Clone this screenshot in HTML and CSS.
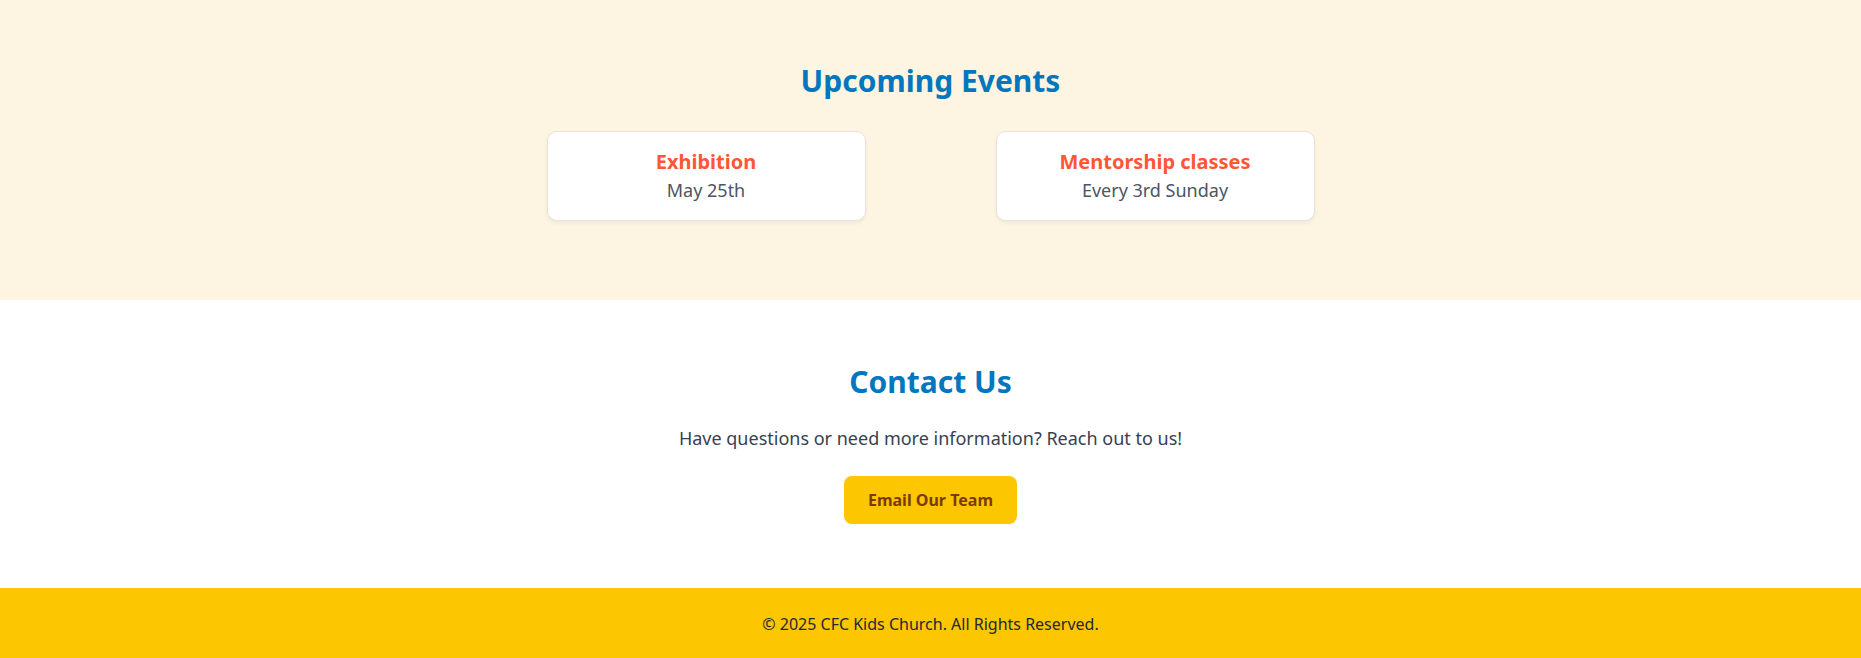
FILE: index.html
```html
<!DOCTYPE html>
<html lang="en">
<head>
<meta charset="utf-8">
<title>CFC Kids Church</title>
<link rel="stylesheet" href="styles.css">
</head>
<body>
  <section class="events">
    <h2 class="section-title">Upcoming Events</h2>
    <div class="event-grid">
      <div class="event-card">
        <h3 class="event-name">Exhibition</h3>
        <p class="event-date">May 25th</p>
      </div>
      <div class="event-card">
        <h3 class="event-name">Mentorship classes</h3>
        <p class="event-date">Every 3rd Sunday</p>
      </div>
    </div>
  </section>
  <section class="contact">
    <h2 class="section-title">Contact Us</h2>
    <p class="contact-text">Have questions or need more information? Reach out to us!</p>
    <a class="email-btn" href="#">Email Our Team</a>
  </section>
  <footer class="footer">
    <p>&copy; 2025 CFC Kids Church. All Rights Reserved.</p>
  </footer>
</body>
</html>
```

FILE: styles.css
```css
* { box-sizing: border-box; }
html, body { margin: 0; padding: 0; }
body {
  font-family: "Noto Sans", "Open Sans", sans-serif;
  color: #374151;
  background: #ffffff;
}
h2, h3, p { margin: 0; }

.section-title {
  font-size: 30px;
  line-height: 36px;
  font-weight: 700;
  color: #0277bd;
  text-align: center;
}

.events {
  background: #fdf5e2;
  padding: 63px 16px 79px;
}
.events .section-title { margin-bottom: 32px; }

.event-grid {
  max-width: 768px;
  margin: 0 auto;
  display: grid;
  grid-template-columns: 319px 319px;
  justify-content: space-between;
}
.event-card {
  background: #ffffff;
  border: 1px solid #e8e4dc;
  border-radius: 10px;
  box-shadow: 0 2px 4px rgba(0,0,0,0.06);
  padding: 16px;
  text-align: center;
}
.event-name {
  font-size: 20px;
  line-height: 28px;
  font-weight: 700;
  color: #ff5733;
}
.event-date {
  font-size: 18px;
  line-height: 28px;
  color: #4b5563;
}

.contact {
  padding: 64px 16px 64px;
  text-align: center;
}
.contact .section-title { margin-bottom: 24px; }
.contact-text {
  font-size: 18px;
  line-height: 28px;
  color: #374151;
  margin-bottom: 24px;
}
.email-btn {
  display: inline-block;
  background: #fcc600;
  color: #7c3a0a;
  font-weight: 700;
  font-size: 16px;
  line-height: 24px;
  padding: 12px 24px;
  border-radius: 8px;
  text-decoration: none;
}

.footer {
  background: #fcc600;
  padding: 24px 16px;
  text-align: center;
  font-size: 16px;
  line-height: 24px;
  color: #1f2937;
}
```
